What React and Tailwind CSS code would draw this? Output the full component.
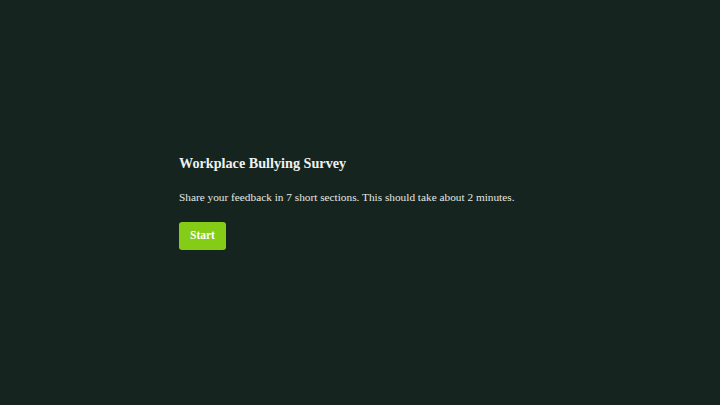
export default function App() {
  return (
    <div className="min-h-screen w-full bg-[#15241f] flex items-center justify-center" style={{ fontFamily: '"Liberation Serif", serif' }}>
      <div className="w-[362px] flex flex-col items-start pb-[2px]">
        <h1 className="text-[14.2px] font-bold text-[#eef2ee] leading-5">Workplace Bullying Survey</h1>
        <p className="mt-[14px] text-[11.3px] text-[#e3e8e4] leading-5">Share your feedback in 7 short sections. This should take about 2 minutes.</p>
        <button className="mt-[15px] h-[28px] w-[47px] rounded-[3px] bg-[#84cc16] text-[11.5px] font-bold text-white">Start</button>
      </div>
    </div>
  );
}
